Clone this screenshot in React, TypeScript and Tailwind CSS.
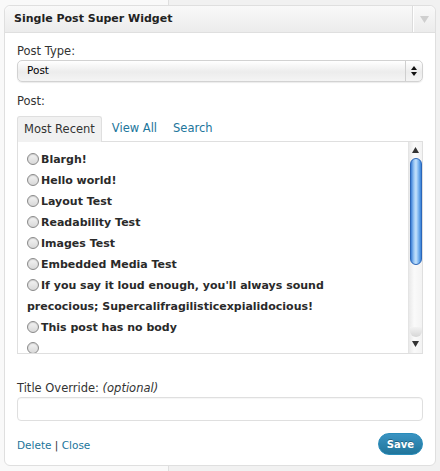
const posts = [
  "Blargh!",
  "Hello world!",
  "Layout Test",
  "Readability Test",
  "Images Test",
  "Embedded Media Test",
  "If you say it loud enough, you'll always sound precocious; Supercalifragilisticexpialidocious!",
  "This post has no body",
  "",
];

function Radio() {
  return (
    <span className="mr-[2px] inline-block h-[12px] w-[12px] translate-y-[2px] rounded-full border border-[#8a8a8a] bg-[linear-gradient(#f4f4f4,#d8d8d8)] shadow-[inset_0_1px_1px_rgba(0,0,0,0.15)]" />
  );
}

function Scrollbar() {
  return (
    <div className="flex w-[14px] flex-col items-center border-l border-[#e4e4e4] bg-[linear-gradient(to_right,#e9e9e9,#fafafa_40%,#f3f3f3)]">
      <svg width="7" height="6" viewBox="0 0 7 6" className="mt-[5px]">
        <path d="M3.5 0L7 6H0z" fill="#333" />
      </svg>
      <div className="mt-[5px] h-[107px] w-[12px] rounded-full border border-[#2b66b8] bg-[linear-gradient(to_right,#3c7fd6,#9cc9f5_30%,#c6e2fb_50%,#7cb5ef_75%,#3a82d8)]" />
      <div className="flex-1" />
      <div className="h-[10px] w-[12px] rounded-b-full bg-[linear-gradient(#f3f3f3,#d6d6d6)]" />
      <svg width="7" height="6" viewBox="0 0 7 6" className="mb-[6px] mt-[4px]">
        <path d="M0 0H7L3.5 6z" fill="#333" />
      </svg>
    </div>
  );
}

export default function App() {
  return (
    <div
      className="h-[471px] w-[440px] overflow-hidden bg-[linear-gradient(to_right,#f9f9f9_168px,#dfdfdf_168px,#dfdfdf_169px,#f1f1f1_169px)] pl-[4px] pt-[5px] text-[#333]"
      style={{ fontFamily: '"DejaVu Sans", "Lucida Grande", Verdana, sans-serif' }}
    >
      <div className="w-[432px] rounded-[6px] border border-[#dfdfdf] bg-white">
        <div className="flex h-[27px] items-stretch justify-between rounded-t-[6px] border-b border-[#dfdfdf] bg-[linear-gradient(#f9f9f9,#ececec)]">
          <div className="flex items-center pl-[9px] text-[11px] font-bold text-[#222]">
            Single Post Super Widget
          </div>
          <div className="flex w-[23px] items-center justify-center border-l border-[#dcdcdc] shadow-[inset_1px_0_0_#fff]">
            <svg width="9" height="7" viewBox="0 0 9 7">
              <path d="M0 0H9L4.5 7z" fill="#cfcfcf" />
            </svg>
          </div>
        </div>

        <div className="px-[12px] pb-[10px]">
          <div className="mt-[10px] text-[11.5px] leading-[16px]">Post Type:</div>
          <div className="mt-[1px] flex h-[22px] items-stretch rounded-[5px] border border-[#d2d2d2] bg-[linear-gradient(#ffffff,#ececec_55%,#f4f4f4)] shadow-[0_1px_1px_rgba(0,0,0,0.08)]">
            <div className="flex flex-1 items-center pl-[9px] text-[10.5px] text-black">Post</div>
            <div className="flex w-[17px] flex-col items-center justify-center gap-[2px] border-l border-[#cfcfcf]">
              <svg width="6" height="4" viewBox="0 0 6 4">
                <path d="M3 0L6 4H0z" fill="#111" />
              </svg>
              <svg width="6" height="4" viewBox="0 0 6 4">
                <path d="M0 0H6L3 4z" fill="#111" />
              </svg>
            </div>
          </div>

          <div className="mt-[11px] text-[11.5px] leading-[16px]">Post:</div>
          <div className="mt-[7px] flex items-end text-[11.5px]">
            <div className="relative -mb-px flex h-[26px] items-center rounded-t-[3px] border border-b-0 border-[#dfdfdf] bg-[#f1f1f1] px-[6px]">
              Most Recent
            </div>
            <div className="ml-[2px] flex h-[25px] items-center px-[8px] text-[#21759b]">View All</div>
            <div className="flex h-[25px] items-center px-[8px] text-[#21759b]">Search</div>
          </div>
          <div className="flex h-[213px] border border-[#dfdfdf]">
            <div className="flex-1 overflow-hidden pl-[9px] pr-[16px] pt-[7px] text-[11px] font-bold leading-[21px] text-[#2a2a2a]">
              {posts.map((p, i) => (
                <div key={i}>
                  <Radio />
                  {p}
                </div>
              ))}
            </div>
            <Scrollbar />
          </div>

          <div className="mt-[26px] text-[11.5px] leading-[16px]">
            Title Override: <em>(optional)</em>
          </div>
          <div className="mt-[1px] h-[24px] rounded-[4px] border border-[#dfdfdf] bg-white shadow-[inset_0_1px_1px_rgba(0,0,0,0.04)]" />

          <div className="mt-[12px] flex h-[22px] items-center justify-between">
            <div className="pt-[4px] text-[10.5px] text-[#21759b]">
              Delete <span className="text-[#333]">|</span> Close
            </div>
            <button className="h-[22px] w-[45px] rounded-full border border-[#298cba] bg-[linear-gradient(#3a93c2,#21759b)] text-[10px] font-bold text-white [text-shadow:0_-1px_0_rgba(0,0,0,0.3)]">
              Save
            </button>
          </div>
        </div>
      </div>
    </div>
  );
}
